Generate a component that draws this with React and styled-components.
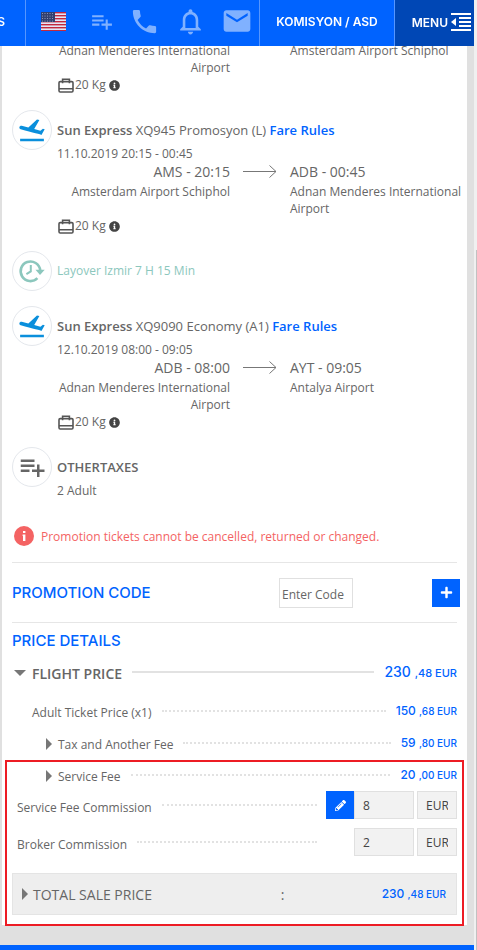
import React from "react";
import styled, { createGlobalStyle } from "styled-components";
import {
  MdPlaylistAdd,
  MdPhone,
  MdNotificationsNone,
  MdEmail,
  MdFlightTakeoff,
} from "react-icons/md";
import { FaInfoCircle, FaPencilAlt, FaPlus } from "react-icons/fa";

const BLUE = "#0063ff";
const LINE = "#e6e6e6";

const GlobalStyle = createGlobalStyle`
  *, *::before, *::after { box-sizing: border-box; }
  html { background: #f0f0f0; }
  body {
    margin: 0;
    background: #f0f0f0;
    color: #666;
    font-family: "Open Sans", sans-serif;
    font-size: 12px;
    line-height: 17px;
  }
  button, input { font: inherit; }
  h2, h3, p { margin: 0; }
`;

const Page = styled.div`
  display: flex;
`;

const Content = styled.div`
  flex: 1;
  min-width: 0;
  background: #e0e0e0;
`;

const Gutter = styled.div`
  width: 3px;
  padding-top: 250px;
`;

const Thumb = styled.div`
  height: 100%;
  margin-left: 2px;
  background: #c1c1c1;
`;

const TopBar = styled.header`
  position: fixed;
  top: 0;
  left: 0;
  right: 3px;
  z-index: 2;
  display: flex;
  height: 46px;
  background: ${BLUE};
  color: #fff;
  font-family: "Inter", sans-serif;
  font-size: 12px;
  font-weight: 600;
`;

const BarText = styled.div`
  display: flex;
  align-items: center;
  justify-content: flex-end;
  width: 26px;
  padding: 0 20px 4px 0;
  border-right: 1px solid #5596ff;
`;

const BarIcons = styled.nav`
  flex: 1;
  display: flex;
  align-items: center;
  gap: 15px;
  padding: 0 6px 4px 15px;
  border-right: 1px solid #5596ff;
`;

const IconButton = styled.button`
  display: flex;
  padding: 0;
  border: 0;
  background: none;
  color: #80b1ff;
  cursor: pointer;

  &:first-child { margin-right: 8px; }
`;

const BarButton = styled.button`
  display: flex;
  align-items: center;
  gap: 3px;
  padding: 0 ${(p) => (p.$dark ? "3px 2px 17px" : "16px 4px")};
  border: 0;
  border-right: ${(p) => (p.$dark ? "0" : "1px solid #5596ff")};
  background: ${(p) => (p.$dark ? "#0047b5" : "none")};
  color: #fff;
  white-space: nowrap;
  cursor: pointer;
`;

const Card = styled.main`
  margin: 0 7px 20px 2px;
  padding: 42px 10px 10px;
  background: #fff;
`;

const Segments = styled.section`
  display: flex;
  flex-direction: column;
  margin-right: -6px;
`;

const Segment = styled.article`
  display: grid;
  grid-template-columns: 40px 1fr;
  column-gap: 5px;
  align-items: start;
  margin-bottom: ${(p) => p.$gap}px;
`;

const RoundIcon = styled.div`
  display: flex;
  align-items: center;
  justify-content: center;
  grid-column: 1;
  height: 40px;
  border: 1px solid #e4e7ec;
  border-radius: 50%;
  color: ${(p) => p.$color};
`;

const SegmentBody = styled.div`
  grid-column: 2;
  padding-top: ${(p) => (p.$continued ? "0" : "10px")};
`;

const SegmentTitle = styled.h3`
  font-size: 13px;
  line-height: 20px;
  font-weight: 400;
  white-space: nowrap;

  b { font-weight: 600; }
`;

const RulesLink = styled.a`
  color: ${BLUE};
  font-weight: 600;
  text-decoration: none;
`;

const SubLine = styled.p`
  margin-top: 6px;
  line-height: 16px;
`;

const Route = styled.div`
  display: grid;
  grid-template-columns: 1fr 60px 1fr;
`;

const Stop = styled.div`
  text-align: ${(p) => (p.$from ? "right" : "left")};
`;

const StopTime = styled.p`
  margin-bottom: 1px;
  font-size: 14px;
  line-height: 20px;
`;

const ArrowCell = styled.div`
  display: flex;
  justify-content: center;
  height: 20px;
  align-items: center;
`;

const Baggage = styled.p`
  display: flex;
  align-items: center;
  gap: 1px;
  line-height: 18px;
  padding-left: 1px;
`;

const InfoMark = styled(FaInfoCircle)`
  margin-left: 2px;
  color: #444;
`;

const LayoverText = styled.p`
  line-height: 20px;
  color: #8cc7bd;
`;

const Notice = styled.p`
  display: flex;
  align-items: center;
  gap: 7px;
  height: 20px;
  margin-left: 2px;
  color: #f46363;
  white-space: nowrap;
`;

const Heading = styled.h2`
  color: ${BLUE};
  font-family: "Inter", sans-serif;
  font-size: 15px;
  line-height: 20px;
  font-weight: 500;
`;

const PromoRow = styled.form`
  display: grid;
  grid-template-columns: 1fr 74px 79px 28px;
  align-items: center;
  height: 61px;
  margin: 16px 0 8px;
  border-top: 1px solid ${LINE};
  border-bottom: 1px solid ${LINE};

  & > * { margin-right: -3px; }
`;

const PromoInput = styled.input`
  width: 74px;
  height: 30px;
  margin-left: 3px;
  padding: 3px 2px 0;
  border: 1px solid #e0e0e0;
  background: #fff;
  color: #555;
  &::placeholder { color: #666; opacity: 1; }
`;

const SquareButton = styled.button`
  grid-column: ${(p) => (p.$promo ? 4 : "auto")};
  display: flex;
  align-items: center;
  justify-content: center;
  width: 28px;
  height: 28px;
  margin-left: ${(p) => (p.$promo ? 3 : 0)}px;
  padding: 0;
  border: 0;
  background: ${BLUE};
  color: #fff;
  cursor: pointer;
`;

const PriceRow = styled.div`
  display: flex;
  align-items: center;
  gap: 10px;
  height: ${(p) => (p.$main ? 42 : 32)}px;
  margin-bottom: ${(p) => (p.$main ? 2 : 0)}px;
  padding-left: ${(p) => p.$indent}px;
`;

const RowLabel = styled.span`
  display: flex;
  align-items: center;
  gap: 6px;
  padding-top: 2px;
  white-space: nowrap;
`;

const MainLabel = styled(RowLabel)`
  font-size: 14px;
  font-weight: 600;
`;

const Leader = styled.span`
  flex: 1;
  border-top: 2px ${(p) => (p.$solid ? "solid" : "dotted")} #e2e2e2;
`;

const Money = styled.span`
  color: ${BLUE};
  font-family: "Inter", sans-serif;
  font-size: ${(p) => (p.$large ? 14 : 12)}px;
  font-weight: 500;
  white-space: nowrap;

  small { font-size: ${(p) => (p.$large ? 11 : 10)}px; }
`;

const Marked = styled.section`
  position: relative;
`;

const Outline = styled.div`
  position: absolute;
  inset: 1px -7px -11px;
  border: 2px solid #ed1c24;
  pointer-events: none;
`;

const CommissionRow = styled.div`
  display: flex;
  align-items: center;
  height: 28px;
  margin-bottom: ${(p) => p.$gap}px;
  padding-left: 5px;
`;

const CommissionLabel = styled.label`
  margin-right: 10px;
  padding-top: 5px;
  white-space: nowrap;
`;

const Editing = styled.div`
  display: grid;
  grid-template-columns: 28px 60px 43px;
  margin-left: 9px;
`;

const AmountInput = styled.input`
  grid-column: 2;
  width: 60px;
  height: 28px;
  padding: 0 8px;
  border: 1px solid #e0e0e0;
  background: #f2f2f2;
  color: #444;
`;

const CurrencyInput = styled(AmountInput)`
  grid-column: 3;
  width: 40px;
  margin-left: 3px;
`;

const Total = styled.div`
  display: grid;
  grid-template-columns: 61% auto 1fr;
  align-items: center;
  height: 42px;
  padding: 0 10px 0 9px;
  border: 1px solid #e4e4e4;
  background: #eee;
`;

const TotalLabel = styled.span`
  display: flex;
  align-items: center;
  gap: 5px;
  font-size: 14px;
  white-space: nowrap;
`;

const Colon = styled.span`
  font-size: 14px;
`;

const TotalMoney = styled(Money)`
  text-align: right;
`;

const Footer = styled.footer`
  height: 5px;
  background: ${BLUE};
`;

const MirroredPlane = styled(MdFlightTakeoff)`
  transform: scaleX(-1);
`;

function Flag() {
  return (
    <svg width="25" height="19" viewBox="0 0 25 19">
      <rect width="25" height="19" fill="#e3e6f5" />
      {[0, 3, 6, 9, 12, 15, 18].map((y) => (
        <rect key={y} y={y} width="25" height="1.4" fill="#c3283e" />
      ))}
      <rect width="14" height="10" fill="#32406f" />
      {[1.5, 4, 6.5, 9].map((y) =>
        [1.5, 4, 6.5, 9, 11.5].map((x) => (
          <circle key={`${x}-${y}`} cx={x} cy={y} r="0.5" fill="#a9b2d0" />
        ))
      )}
    </svg>
  );
}

function MenuIcon() {
  return (
    <svg width="20" height="18" viewBox="0 0 20 18" fill="currentColor">
      <path d="M0 0h20v2H0zM8 4h12v2H8zM8 8h12v2H8zM8 12h12v2H8zM0 16h20v2H0zM0 9l5-4v8z" />
    </svg>
  );
}

function Case() {
  return (
    <svg width="16" height="15" viewBox="0 0 16 15" fill="none" stroke="#555" strokeWidth="1.6">
      <rect x="1" y="3.6" width="14" height="10.4" rx="1.2" />
      <path d="M1 10.8h14M4.6 5.2V1.2h6.8v4" />
    </svg>
  );
}

function Arrow() {
  return (
    <svg width="34" height="14" viewBox="0 0 34 14" fill="none" stroke="#777" strokeWidth="1">
      <path d="M0 6.5h33M26.5 0.5l6.5 6-6.5 6" />
    </svg>
  );
}

function LayoverIcon() {
  return (
    <svg width="28" height="26" viewBox="0 0 28 26" fill="none" stroke="#8cc7bd">
      <path d="M22.2 12.2A9.8 9.8 0 1 0 19.4 20.2" strokeWidth="2.6" />
      <path d="M17.5 11.8h9.2L22 17z" fill="#8cc7bd" stroke="none" />
      <path d="M12.8 7v6.4l-4.4 2.8" strokeWidth="2" />
    </svg>
  );
}

function Alert() {
  return (
    <svg width="20" height="20" viewBox="0 0 20 20">
      <circle cx="10" cy="10" r="10" fill="#f46363" />
      <path d="M9 5h2.4v2H9zM8.600 8.400h2.800V15H9V10h-.4z" fill="#fff" />
    </svg>
  );
}

function Caret({ open }) {
  return open ? (
    <svg width="12" height="6" viewBox="0 0 12 6">
      <path d="M0 0h12L6 6z" fill="#777" />
    </svg>
  ) : (
    <svg width="6" height="12" viewBox="0 0 6 12">
      <path d="M0 0v12l6-6z" fill="#777" />
    </svg>
  );
}

function Price({ whole, cents, large }) {
  return (
    <Money $large={large}>
      {whole} <small>,{cents} EUR</small>
    </Money>
  );
}

function BaggageLine() {
  return (
    <Baggage>
      <Case /> 20 Kg <InfoMark size={11} />
    </Baggage>
  );
}

function Flight({ code, cabin, date, from, to, gap }) {
  return (
    <Segment $gap={gap}>
      <RoundIcon $color="#0a8fdc">
        <MirroredPlane size={30} />
      </RoundIcon>
      <SegmentBody>
        <SegmentTitle>
          <b>Sun Express</b> {code} {cabin} <RulesLink href="#rules">Fare Rules</RulesLink>
        </SegmentTitle>
        <SubLine>{date}</SubLine>
        <Route>
          <Stop $from>
            <StopTime>{from.time}</StopTime>
            {from.name}
          </Stop>
          <ArrowCell>
            <Arrow />
          </ArrowCell>
          <Stop>
            <StopTime>{to.time}</StopTime>
            {to.name}
          </Stop>
        </Route>
        <BaggageLine />
      </SegmentBody>
    </Segment>
  );
}

export default function App() {
  return (
    <>
      <GlobalStyle />
      <TopBar>
        <BarText>S</BarText>
        <BarIcons>
          <IconButton aria-label="Language"><Flag /></IconButton>
          <IconButton aria-label="Add to list"><MdPlaylistAdd size={25} /></IconButton>
          <IconButton aria-label="Call"><MdPhone size={31} /></IconButton>
          <IconButton aria-label="Notifications"><MdNotificationsNone size={31} /></IconButton>
          <IconButton aria-label="Messages"><MdEmail size={32} /></IconButton>
        </BarIcons>
        <BarButton>KOMISYON / ASD</BarButton>
        <BarButton $dark>MENU <MenuIcon /></BarButton>
      </TopBar>
      <Page>
        <Content>
          <Card>
            <Segments>
              <Segment $gap={16}>
                <SegmentBody $continued>
                  <Route>
                    <Stop $from>Adnan Menderes International Airport</Stop>
                    <span />
                    <Stop>Amsterdam Airport Schiphol</Stop>
                  </Route>
                  <BaggageLine />
                </SegmentBody>
              </Segment>
              <Flight
                code="XQ945"
                cabin="Promosyon (L)"
                date="11.10.2019 20:15 - 00:45"
                from={{ time: "AMS - 20:15", name: "Amsterdam Airport Schiphol" }}
                to={{ time: "ADB - 00:45", name: "Adnan Menderes International Airport" }}
                gap={16}
              />
              <Segment $gap={15}>
                <RoundIcon><LayoverIcon /></RoundIcon>
                <SegmentBody><LayoverText>Layover Izmir 7 H 15 Min</LayoverText></SegmentBody>
              </Segment>
              <Flight
                code="XQ9090"
                cabin="Economy (A1)"
                date="12.10.2019 08:00 - 09:05"
                from={{ time: "ADB - 08:00", name: "Adnan Menderes International Airport" }}
                to={{ time: "AYT - 09:05", name: "Antalya Airport" }}
                gap={16}
              />
              <Segment $gap={27}>
                <RoundIcon $color="#666"><MdPlaylistAdd size={30} /></RoundIcon>
                <SegmentBody>
                  <SegmentTitle><b>OTHERTAXES</b></SegmentTitle>
                  <SubLine>2 Adult</SubLine>
                </SegmentBody>
              </Segment>
            </Segments>
            <Notice>
              <Alert /> Promotion tickets cannot be cancelled, returned or changed.
            </Notice>
            <PromoRow onSubmit={(e) => e.preventDefault()}>
              <Heading>PROMOTION CODE</Heading>
              <PromoInput aria-label="Promotion code" placeholder="Enter Code" />
              <SquareButton $promo aria-label="Add promotion code"><FaPlus size={13} /></SquareButton>
            </PromoRow>
            <Heading>PRICE DETAILS</Heading>
            <PriceRow $main $indent={2}>
              <MainLabel><Caret open /> FLIGHT PRICE</MainLabel>
              <Leader $solid />
              <Price large whole="230" cents="48" />
            </PriceRow>
            <PriceRow $indent={20}>
              <RowLabel>Adult Ticket Price (x1)</RowLabel>
              <Leader />
              <Price whole="150" cents="68" />
            </PriceRow>
            <PriceRow $indent={34}>
              <RowLabel><Caret /> Tax and Another Fee</RowLabel>
              <Leader />
              <Price whole="59" cents="80" />
            </PriceRow>
            <Marked>
              <PriceRow $indent={34}>
                <RowLabel><Caret /> Service Fee</RowLabel>
                <Leader />
                <Price whole="20" cents="00" />
              </PriceRow>
              <CommissionRow $gap={9}>
                <CommissionLabel htmlFor="service">Service Fee Commission</CommissionLabel>
                <Leader />
                <Editing>
                  <SquareButton aria-label="Edit service fee commission"><FaPencilAlt size={11} /></SquareButton>
                  <AmountInput id="service" defaultValue="8" />
                  <CurrencyInput aria-label="Service fee currency" defaultValue="EUR" />
                </Editing>
              </CommissionRow>
              <CommissionRow $gap={17}>
                <CommissionLabel htmlFor="broker">Broker Commission</CommissionLabel>
                <Leader />
                <Editing>
                  <AmountInput id="broker" defaultValue="2" />
                  <CurrencyInput aria-label="Broker currency" defaultValue="EUR" />
                </Editing>
              </CommissionRow>
              <Total>
                <TotalLabel><Caret /> TOTAL SALE PRICE</TotalLabel>
                <Colon>:</Colon>
                <TotalMoney>230 <small>,48 EUR</small></TotalMoney>
              </Total>
              <Outline />
            </Marked>
          </Card>
          <Footer />
        </Content>
        <Gutter><Thumb /></Gutter>
      </Page>
    </>
  );
}
